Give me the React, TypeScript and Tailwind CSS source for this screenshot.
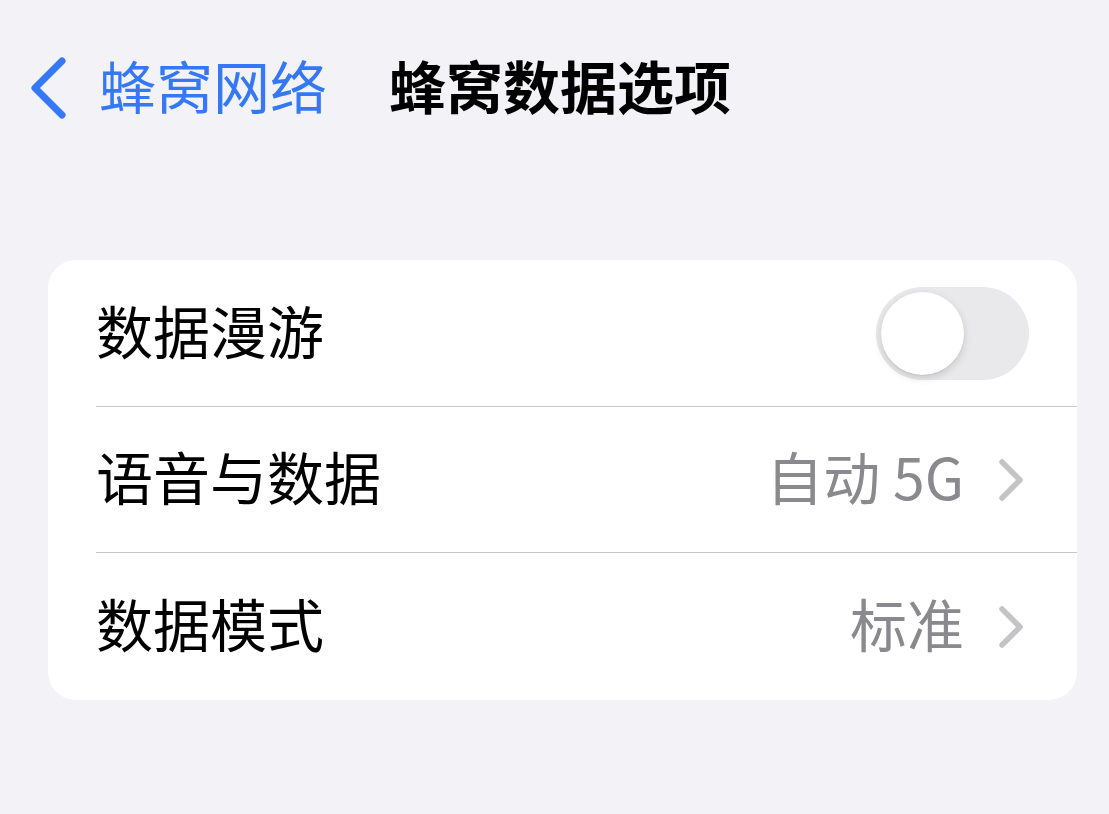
import React, { useState } from 'react';

const font = { fontFamily: '"Noto Sans CJK SC", "Noto Sans", sans-serif' };

const Chevron = () => (
  <svg width="30" height="44" viewBox="0 0 30 44" className="shrink-0">
    <path d="M5 4 L23 22 L5 40" fill="none" stroke="#c4c4c7" strokeWidth="5.5" strokeLinecap="round" strokeLinejoin="round" />
  </svg>
);

export default function App() {
  const [roaming, setRoaming] = useState(false);

  return (
    <div className="w-[1109px] h-[814px] bg-[#f2f2f7] overflow-hidden" style={font}>
      {/* Nav bar */}
      <div className="h-[176px] flex items-center">
        <svg width="50" height="70" viewBox="0 0 50 70" className="ml-[22px] shrink-0">
          <path d="M40 8 L13 35 L40 62" fill="none" stroke="#3478f6" strokeWidth="7" strokeLinecap="round" strokeLinejoin="round" />
        </svg>
        <span className="ml-[27px] -mt-[8px] text-[57px] leading-none text-[#3478f6]">蜂窝网络</span>
        <span className="ml-[62px] -mt-[8px] text-[57px] leading-none font-bold text-black">蜂窝数据选项</span>
      </div>

      {/* Settings group */}
      <div className="mt-[84px] ml-[48px] mr-[32px] bg-white rounded-[28px] overflow-hidden">
        <div className="h-[146px] flex items-center justify-between pl-[48px] pr-[48px]">
          <span className="-mt-[8px] text-[57px] leading-none text-black">数据漫游</span>
          <button
            onClick={() => setRoaming(!roaming)}
            className={`relative w-[153px] h-[93px] rounded-full transition-colors ${roaming ? 'bg-[#34c759]' : 'bg-[#e9e9eb]'}`}
          >
            <span
              className={`absolute top-[5px] w-[83px] h-[83px] rounded-full bg-white shadow-[0_3px_8px_rgba(0,0,0,0.15),0_1px_1px_rgba(0,0,0,0.06)] transition-all ${roaming ? 'left-[65px]' : 'left-[5px]'}`}
            />
          </button>
        </div>
        <div className="ml-[48px] h-px bg-[#c8c8cc]" />
        <div className="h-[145px] flex items-center justify-between pl-[48px] pr-[50px]">
          <span className="-mt-[8px] text-[57px] leading-none text-black">语音与数据</span>
          <div className="flex items-center gap-[33px]">
            <span className="-mt-[8px] text-[57px] leading-none text-[#8a8a8e]">自动 5G</span>
            <Chevron />
          </div>
        </div>
        <div className="ml-[48px] h-px bg-[#c8c8cc]" />
        <div className="h-[147px] flex items-center justify-between pl-[48px] pr-[50px]">
          <span className="-mt-[8px] text-[57px] leading-none text-black">数据模式</span>
          <div className="flex items-center gap-[33px]">
            <span className="-mt-[8px] text-[57px] leading-none text-[#8a8a8e]">标准</span>
            <Chevron />
          </div>
        </div>
      </div>
    </div>
  );
}
